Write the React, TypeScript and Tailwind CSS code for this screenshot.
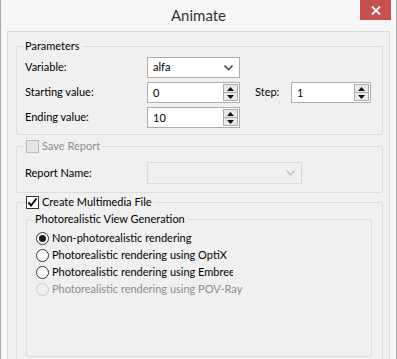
import React from "react";

const font = { fontFamily: 'Lato, "Noto Sans", sans-serif' };

const Check: React.FC<{ checked?: boolean; disabled?: boolean }> = ({
  checked,
  disabled,
}) => (
  <span
    className={
      "inline-flex h-[13px] w-[13px] shrink-0 items-center justify-center border " +
      (disabled ? "border-[#bcbcbc] bg-[#e6e6e6]" : "border-[#333333] bg-white")
    }
  >
    {checked && (
      <svg width="11" height="11" viewBox="0 0 11 11">
        <path d="M1.5 5.5 L4 8.5 L9.5 1.5" fill="none" stroke="#000" strokeWidth="2" />
      </svg>
    )}
  </span>
);

const Radio: React.FC<{
  checked?: boolean;
  disabled?: boolean;
  label: string;
  clip?: boolean;
}> = ({ checked, disabled, label, clip }) => (
  <div className="flex h-[17px] items-center gap-[3px]">
    <span
      className={
        "inline-flex h-[13px] w-[13px] shrink-0 items-center justify-center rounded-full border " +
        (disabled ? "border-[#c8c8c8] bg-[#f0f0f0]" : "border-[#333333] bg-white")
      }
    >
      {checked && <span className="h-[7px] w-[7px] rounded-full bg-[#1a1a1a]" />}
    </span>
    <span
      className={
        "whitespace-nowrap " +
        (clip ? "w-[181px] overflow-hidden " : "") +
        (disabled ? "text-[#8d8d8d]" : "text-black")
      }
    >
      {label}
    </span>
  </div>
);

const Spin: React.FC<{ value: string; width: string }> = ({ value, width }) => (
  <div className={"flex h-[21px] items-center border border-[#abadb3] bg-white " + width}>
    <span className="flex-1 pl-[5px] leading-none">{value}</span>
    <div className="mr-[1px] flex h-[17px] w-[15px] flex-col border border-[#acacac] bg-[#e9e9e9]">
      <div className="flex flex-1 items-center justify-center border-b border-[#acacac]">
        <svg width="7" height="4" viewBox="0 0 7 4">
          <path d="M0 4 L3.5 0 L7 4 Z" fill="#111" />
        </svg>
      </div>
      <div className="flex flex-1 items-center justify-center">
        <svg width="7" height="4" viewBox="0 0 7 4">
          <path d="M0 0 L3.5 4 L7 0 Z" fill="#111" />
        </svg>
      </div>
    </div>
  </div>
);

const Chevron: React.FC<{ color: string }> = ({ color }) => (
  <svg width="9" height="6" viewBox="0 0 9 6">
    <path d="M0.5 0.5 L4.5 4.5 L8.5 0.5" fill="none" stroke={color} strokeWidth="1.6" />
  </svg>
);

export default function App() {
  return (
    <div
      className="h-[359px] w-[397px] overflow-hidden border-l border-r border-[#aaaaaa] bg-[#f7f7f7] text-[11px] text-black"
      style={font}
    >
      {/* title bar */}
      <div className="relative flex h-[31px] items-center justify-center">
        <span className="text-[15px] text-[#333333]">Animate</span>
        <div className="absolute right-[5px] top-0 flex h-[20px] w-[31px] items-center justify-center bg-[#c75050]">
          <svg width="10" height="9" viewBox="0 0 10 9">
            <path d="M1 0.5 L9 8.5 M9 0.5 L1 8.5" stroke="#fff" strokeWidth="1.8" />
          </svg>
        </div>
      </div>

      {/* client area */}
      <div className="ml-[6px] mr-[6px] h-[340px] border border-[#dadada] bg-[#f0f0f0] pl-[8px] pr-[6px] pt-[6px]">
        <fieldset className="rounded-[2px] border border-[#dcdcdc] pb-[6px] pl-[8px]">
          <legend className="-ml-[2px] px-[2px] leading-[16px]">Parameters</legend>
          <div className="mt-[3px] flex flex-col gap-[4px]">
            <div className="flex h-[21px] items-center">
              <span className="w-[122px]">Variable:</span>
              <div className="flex h-[21px] w-[93px] items-center justify-between border border-[#acacac] bg-white pl-[5px] pr-[6px]">
                <span>alfa</span>
                <Chevron color="#555" />
              </div>
            </div>
            <div className="flex h-[21px] items-center">
              <span className="w-[122px]">Starting value:</span>
              <Spin value="0" width="w-[93px]" />
              <span className="ml-[15px] w-[36px]">Step:</span>
              <Spin value="1" width="w-[80px]" />
            </div>
            <div className="flex h-[21px] items-center">
              <span className="w-[122px]">Ending value:</span>
              <Spin value="10" width="w-[93px]" />
            </div>
          </div>
        </fieldset>

        <fieldset className="mt-[3px] rounded-[2px] border border-[#dcdcdc] pb-[8px] pl-[8px]">
          <legend className="ml-[1px] flex items-center gap-[3px] pr-[2px] leading-[16px]">
            <Check disabled />
            <span className="text-[#8d8d8d]">Save Report</span>
          </legend>
          <div className="mt-[8px] flex h-[22px] items-center">
            <span className="w-[122px]">Report Name:</span>
            <div className="flex h-[22px] w-[155px] items-center justify-end border border-[#d9d9d9] bg-[#f0f0f0] pr-[6px]">
              <Chevron color="#c8c8c8" />
            </div>
          </div>
        </fieldset>

        <fieldset className="mt-[1px] h-[200px] rounded-[2px] border border-[#dcdcdc] pl-[9px] pr-[10px]">
          <legend className="flex items-center gap-[3px] pr-[2px] leading-[16px]">
            <Check checked />
            <span>Create Multimedia File</span>
          </legend>
          <fieldset className="mt-[1px] h-[146px] rounded-[2px] border border-[#dcdcdc] pl-[9px]">
            <legend className="-ml-[3px] px-[2px] leading-[16px]">Photorealistic View Generation</legend>
            <div className="mt-[3px] flex flex-col">
              <Radio checked label="Non-photorealistic rendering" />
              <Radio label="Photorealistic rendering using OptiX" />
              <Radio clip label="Photorealistic rendering using Embree" />
              <Radio disabled label="Photorealistic rendering using POV-Ray" />
            </div>
          </fieldset>
        </fieldset>
      </div>
    </div>
  );
}
